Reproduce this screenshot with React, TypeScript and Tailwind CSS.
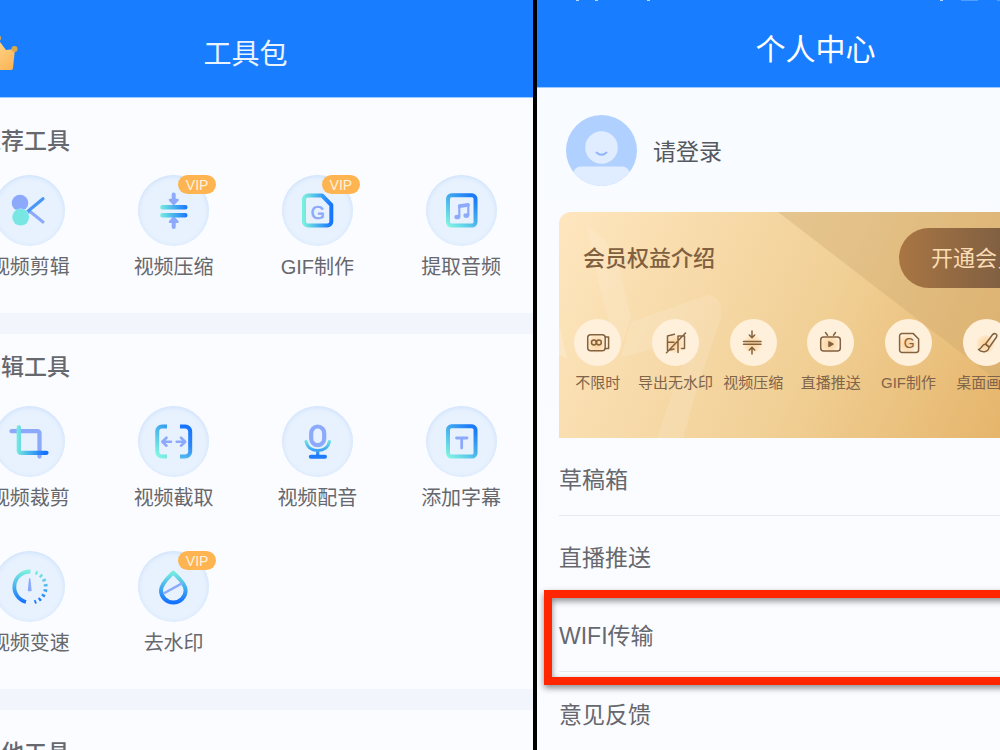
import React from "react";

const PERI = "#8da9fc";
const BROWN = "#82623f";

function Gradients() {
  return (
    <svg width="0" height="0" className="absolute" aria-hidden="true">
      <defs>
        <linearGradient id="h" gradientUnits="userSpaceOnUse" x1="22" y1="0" x2="50" y2="0">
          <stop offset="0" stopColor="#78eede" />
          <stop offset="1" stopColor="#1673ff" />
        </linearGradient>
        <linearGradient id="d" gradientUnits="userSpaceOnUse" x1="22" y1="50" x2="46" y2="22">
          <stop offset="0" stopColor="#80f3e2" />
          <stop offset="1" stopColor="#1c7cf8" />
        </linearGradient>
        <linearGradient id="v" gradientUnits="userSpaceOnUse" x1="0" y1="20" x2="0" y2="51">
          <stop offset="0" stopColor="#7cf0de" />
          <stop offset="1" stopColor="#1673ff" />
        </linearGradient>
        <linearGradient id="vr" gradientUnits="userSpaceOnUse" x1="50" y1="20" x2="44" y2="51">
          <stop offset="0" stopColor="#1673ff" />
          <stop offset="0.6" stopColor="#2a86fa" />
          <stop offset="1" stopColor="#4fb6ee" />
        </linearGradient>
        <linearGradient id="m" gradientUnits="userSpaceOnUse" x1="0" y1="33" x2="0" y2="51">
          <stop offset="0" stopColor="#7cf0de" />
          <stop offset="1" stopColor="#1673ff" />
        </linearGradient>
        <linearGradient id="crown" x1="0" y1="0" x2="1" y2="1">
          <stop offset="0" stopColor="#ffe3a0" />
          <stop offset="1" stopColor="#fbb254" />
        </linearGradient>
        <radialGradient id="glow">
          <stop offset="0" stopColor="#ffcf94" />
          <stop offset="1" stopColor="#ffcf94" stopOpacity="0.2" />
        </radialGradient>
      </defs>
    </svg>
  );
}

const icons: Record<string, React.ReactNode> = {
  scissors: (
    <>
      <path d="M33 38.500L36 36.500L49 47" stroke={PERI} strokeWidth="3" />
      <circle cx="26" cy="28" r="8.3" fill={PERI} />
      <path d="M30 39.500L49 23.700" stroke="#4a98f5" strokeWidth="3.200" />
      <circle cx="26.700" cy="42.200" r="8.800" fill="#e8f2fe" />
      <circle cx="26.700" cy="42.200" r="8.400" fill="#78e6e2" />
    </>
  ),
  compress: (
    <>
      <path d="M35.700 19.500V27M35.700 52V44" stroke={PERI} strokeWidth="4" />
      <path d="M32 25h7.500l-3.800 4zM32 46.800h7.500l-3.800-4z" fill={PERI} stroke={PERI} strokeWidth="2.500" />
      <path d="M24.400 32.200H47.300M24.400 40.200H47.300" stroke="url(#h)" strokeWidth="4.500" />
    </>
  ),
  gif: (
    <>
      <path d="M26 20.500H40L49.300 30V46.500a4 4 0 0 1-4 4H26a4 4 0 0 1-4-4V24.500a4 4 0 0 1 4-4z" stroke="url(#h)" strokeWidth="4" />
      <text x="35.800" y="43.500" textAnchor="middle" fontSize="18" fontFamily="Liberation Sans" fill={PERI} stroke={PERI} strokeWidth="0.700">G</text>
    </>
  ),
  music: (
    <>
      <rect x="22" y="20.300" width="27.500" height="30.300" rx="3.500" stroke="url(#d)" strokeWidth="4" />
      <path d="M33.300 42V30.300L42.300 29V40" stroke={PERI} strokeWidth="2.200" />
      <path d="M33.300 31.500l9-1.300" stroke={PERI} strokeWidth="3" />
      <ellipse cx="31.300" cy="42" rx="2.900" ry="2.300" fill={PERI} />
      <ellipse cx="40.300" cy="40.600" rx="2.900" ry="2.300" fill={PERI} />
    </>
  ),
  crop: (
    <>
      <path d="M17.500 25.200H43.500a2 2 0 0 1 2 2V50.500" stroke={PERI} strokeWidth="4.300" />
      <path d="M24.800 21.500V44.800a2 2 0 0 0 2 2H52.500" stroke="url(#h)" strokeWidth="4.300" />
    </>
  ),
  cut: (
    <>
      <path d="M29 20.500H24.200a5 5 0 0 0-5 5V45.500a5 5 0 0 0 5 5H29" stroke="url(#d)" strokeWidth="4" strokeLinecap="butt" />
      <path d="M42 20.500H47.200a5 5 0 0 1 5 5V45.500a5 5 0 0 1-5 5H42" stroke="url(#vr)" strokeWidth="4" strokeLinecap="butt" />
      <path d="M33 35.700H25M28.500 31.700l-4.200 4 4.200 4M38.700 35.700H46.500M43 31.700l4.200 4-4.200 4" stroke={PERI} strokeWidth="2.600" />
    </>
  ),
  mic: (
    <>
      <rect x="29.200" y="20.500" width="13" height="18.700" rx="6.500" stroke={PERI} strokeWidth="4.200" />
      <path d="M24 35.500C25.500 42 30 44.500 35.700 44.500S46 42 47.500 35.500M35.700 45V50" stroke="url(#m)" strokeWidth="3.200" />
      <path d="M28.800 50.800H43" stroke="#1f7cfb" strokeWidth="4" />
    </>
  ),
  caption: (
    <>
      <rect x="22" y="20.300" width="27.500" height="30.300" rx="3.500" stroke="url(#d)" strokeWidth="4" />
      <path d="M30.500 32H41M35.700 32V42" stroke={PERI} strokeWidth="2.800" />
    </>
  ),
  speed: (
    <>
      <path d="M36.500 20.500A15.500 15.500 0 0 0 32 51" stroke="url(#v)" strokeWidth="3.800" strokeLinecap="butt" />
      <path d="M41.500 21.500A15.500 15.500 0 0 1 40.500 51" stroke="url(#v)" strokeWidth="3.800" strokeLinecap="butt" strokeDasharray="2.300 3" />
      <path d="M35.700 28l-1.200 11.500h2.400z" fill={PERI} stroke={PERI} strokeWidth="1.500" />
    </>
  ),
  drop: (
    <>
      <path d="M35.200 21.500C32 25 23 32 23 39.500a12.300 12 0 0 0 24.600 0C47.600 32 38.500 25 35.200 21.500z" stroke="url(#v)" strokeWidth="4" />
      <path d="M26.500 42L43.500 32.600" stroke={PERI} strokeWidth="2.400" />
    </>
  ),
};

const goldIcons: Record<string, React.ReactNode> = {
  unlimited: (
    <>
      <rect x="13.700" y="15.700" width="17.500" height="16" rx="3" />
      <path d="M31.200 18H34.600V29.500H31.200" />
      <circle cx="19.900" cy="23.500" r="2.400" />
      <circle cx="24.900" cy="23.500" r="2.400" />
    </>
  ),
  nomark: (
    <path d="M22.500 15.200L15.500 17V31.500L22 30M15.500 23.300H22M26 33.500V17H32.500V29.500H29.500M14.500 33.800L33.500 14" />
  ),
  compress: (
    <>
      <path d="M13.500 22.500H31M13.500 25.300H31" />
      <path d="M22 12V18.500M19.300 16l2.700 2.700 2.700-2.700M22 35V28.500M19.300 31l2.700-2.700 2.700 2.700" />
    </>
  ),
  live: (
    <>
      <rect x="13.700" y="18" width="19.600" height="14" rx="3" />
      <path d="M18.500 13.500l2 2.700M28.500 13.500l-2 2.700" />
      <path d="M22 22.800v4.600l4-2.300z" fill={BROWN} />
    </>
  ),
  gif: (
    <>
      <path d="M17 14.600H28.300L33.600 20V31a2.400 2.400 0 0 1-2.400 2.400H17A2.400 2.400 0 0 1 14.600 31V17A2.400 2.400 0 0 1 17 14.600z" />
      <text x="24.300" y="29.300" textAnchor="middle" fontSize="14" fontFamily="Liberation Sans" fill={BROWN} strokeWidth="0">G</text>
    </>
  ),
  brush: (
    <>
      <path d="M22.500 25L29.500 15.800C31.500 13.500 35 15 33.500 18L26.500 28z" />
      <path d="M22.500 25.300C18.500 25 19.500 30 15.500 30.500C18 33.500 25.500 34 26 28.300z" />
    </>
  ),
};

type Tool = { name: string; icon: string; vip?: boolean };

const recommended: Tool[] = [
  { name: "视频剪辑", icon: "scissors" },
  { name: "视频压缩", icon: "compress", vip: true },
  { name: "GIF制作", icon: "gif", vip: true },
  { name: "提取音频", icon: "music" },
];

const editing: Tool[] = [
  { name: "视频裁剪", icon: "crop" },
  { name: "视频截取", icon: "cut" },
  { name: "视频配音", icon: "mic" },
  { name: "添加字幕", icon: "caption" },
  { name: "视频变速", icon: "speed" },
  { name: "去水印", icon: "drop", vip: true },
];

const benefits = [
  { name: "不限时", icon: "unlimited" },
  { name: "导出无水印", icon: "nomark" },
  { name: "视频压缩", icon: "compress" },
  { name: "直播推送", icon: "live" },
  { name: "GIF制作", icon: "gif" },
  { name: "桌面画笔", icon: "brush" },
];

const menu = ["草稿箱", "直播推送", "WIFI传输", "意见反馈"];

function ToolGrid({ tools }: { tools: Tool[] }) {
  return (
    <div className="grid grid-cols-4 gap-y-9">
      {tools.map((t) => (
        <button key={t.name} type="button" className="flex flex-col items-center gap-1">
          <span className="relative block size-[71px] rounded-full bg-[#e8f2fe] shadow-[inset_0_1px_5px_#c9defc]">
            <svg viewBox="0 0 71 71" className="size-full" fill="none" strokeLinecap="round" strokeLinejoin="round" aria-hidden="true">
              {icons[t.icon]}
            </svg>
            {t.vip && (
              <span className="absolute top-0 left-10 flex h-[19px] w-[38px] items-center justify-center rounded-full bg-[#fdb451] pt-px text-sm text-[#fff3df]">
                VIP
              </span>
            )}
          </span>
          <span className="text-xl leading-[34px] whitespace-nowrap text-[#66686d]">{t.name}</span>
        </button>
      ))}
    </div>
  );
}

function Heading({ children }: { children: React.ReactNode }) {
  return <h2 className="px-5 text-[23px] leading-8 font-medium text-[#66686e]">{children}</h2>;
}

function Toolkit() {
  return (
    <section className="flex min-w-0 flex-[533] overflow-hidden bg-[#fbfcff]">
      <div className="-ml-[42px] flex min-w-0 flex-1 flex-col">
        <header className="grid h-[98px] shrink-0 grid-cols-3 items-center border-b border-[#9cc9ff] bg-[#187dff] pt-3">
          <svg viewBox="0 0 42 36" className="mb-1 ml-[19px] h-9 w-[42px]" aria-label="VIP">
            <path d="M1 14L11 16 20 3 29 15 38 14 36 33a2 2 0 0 1-2 2H6a2 2 0 0 1-2-2z" fill="url(#crown)" />
            <circle cx="21" cy="3" r="3" fill="#dca94a" />
            <circle cx="37.500" cy="14" r="3" fill="#dca94a" />
            <circle cx="2.500" cy="14" r="2.500" fill="#dca94a" />
          </svg>
          <h1 className="text-center text-[28px] leading-10 text-[#eaf4ff]">工具包</h1>
        </header>
        <div className="flex shrink-0 flex-col gap-[18px] pt-[27px] pb-[29px]">
          <Heading>推荐工具</Heading>
          <ToolGrid tools={recommended} />
        </div>
        <div className="h-[21px] shrink-0 bg-[#f2f5fb]" />
        <div className="flex shrink-0 flex-col gap-[23px] pt-[17px] pb-[29px]">
          <Heading>编辑工具</Heading>
          <ToolGrid tools={editing} />
        </div>
        <div className="h-[21px] shrink-0 bg-[#f2f5fb]" />
        <div className="shrink-0 pt-[27px]">
          <Heading>其他工具</Heading>
        </div>
      </div>
    </section>
  );
}

function MemberCard() {
  return (
    <div className="relative h-[226px] shrink-0 overflow-hidden rounded-t-xl bg-linear-115 from-[#fee6bf] via-[#f1d096] to-[#e2ad5d]">
      <svg viewBox="0 0 513 226" preserveAspectRatio="none" className="absolute inset-0 size-full" aria-hidden="true">
        <path d="M219 0H513V226z" fill="#c9a66e" fillOpacity="0.360" />
        <path d="M27 12L48 30 60 55 72 106 60 140 50 110 38 65z" fill="#fff" fillOpacity="0.120" />
        <path d="M72 110L148 83Q164 84 162 105L140 170 124 226H98L132 128 62 145z" fill="#fff" fillOpacity="0.120" />
        <path d="M0 112L8 147 0 143z" fill="#fff" fillOpacity="0.200" />
      </svg>
      <div className="relative flex flex-col gap-[31px]">
        <div className="flex items-center justify-between pt-4 pl-6">
          <h2 className="pt-0.5 text-[22px] leading-8 font-medium text-[#80603f]">会员权益介绍</h2>
          <button type="button" className="h-[60px] w-[173px] rounded-l-full bg-linear-to-r from-[#a97643] to-[#65503f] pl-8 text-left text-[22px] whitespace-nowrap text-[#fbdcb4]">
            开通会员
          </button>
        </div>
        <ul className="grid w-[466px] grid-cols-6">
          {benefits.map((b) => (
            <li key={b.name} className="flex flex-col items-center gap-[5px]">
              <span className="block size-[47px] rounded-full bg-[#fff0db]">
                <svg viewBox="0 0 47 47" className="size-full" fill="none" stroke={BROWN} strokeWidth="1.500" strokeLinecap="round" strokeLinejoin="round" aria-hidden="true">
                  <circle cx="22.500" cy="25" r="9" fill="url(#glow)" stroke="none" />
                  {goldIcons[b.icon]}
                </svg>
              </span>
              <span className="text-[15px] leading-6 whitespace-nowrap text-[#80644a]">{b.name}</span>
            </li>
          ))}
        </ul>
      </div>
    </div>
  );
}

function Profile() {
  return (
    <section className="min-w-0 flex-[463] overflow-hidden bg-[#fbfcff]">
      <div className="-mr-[94px] flex flex-col">
        <header className="relative flex h-[88px] items-center justify-center border-b border-[#9cc9ff] bg-[#187dff] pt-3">
          <svg width="463" height="2" className="absolute top-0 left-0" stroke="#fff" strokeOpacity="0.700" aria-hidden="true">
            <path d="M39 0.500h3M58 0.500h3M110 0.500h3M403 0.500h3" />
            <path d="M424 0.500h17M460 0.500h3" strokeOpacity="0.250" />
          </svg>
          <h1 className="text-[30px] leading-10 text-white">个人中心</h1>
        </header>
        <div className="flex flex-col bg-linear-to-b from-[#f8fbff] to-[#fbfcff] px-[22px]">
          <button type="button" className="flex h-[124px] items-center gap-4 pl-[7px]">
            <svg viewBox="0 0 71 71" className="size-[71px]" aria-hidden="true">
              <clipPath id="face">
                <circle cx="35.500" cy="35.500" r="35.500" />
              </clipPath>
              <g clipPath="url(#face)">
                <rect width="71" height="71" fill="#b0d1ff" />
                <circle cx="35.500" cy="32.500" r="16.300" fill="#e0ecff" />
                <rect x="7" y="51.500" width="57" height="30" rx="8" fill="#e0ecff" />
              </g>
              <path d="M30.500 37.500Q35.500 42 40.500 37.500" fill="none" stroke="#8fb4fa" strokeWidth="1.800" strokeLinecap="round" />
            </svg>
            <span className="pt-1 text-[23px] leading-8 text-[#55585e]">请登录</span>
          </button>
          <MemberCard />
          <ul>
            {menu.map((item) => (
              <li key={item} className="relative h-[78px] border-b border-[#e6e9ef] last:border-0">
                <a href="#" className="flex h-full items-center pt-2 text-[23px] text-[#66686e]">
                  {item}
                </a>
                {item === "WIFI传输" && (
                  <span className="pointer-events-none absolute -top-1 -right-10 -left-[15px] h-[95px] border-8 border-[#ff2600] drop-shadow-[0_3px_3px_rgba(0,0,0,0.45)]" />
                )}
              </li>
            ))}
          </ul>
        </div>
      </div>
    </section>
  );
}

export default function App() {
  return (
    <main lang="zh-CN" className="flex h-screen overflow-hidden bg-white font-['Liberation_Sans','Noto_Sans_CJK_SC',sans-serif]">
      <Gradients />
      <Toolkit />
      <div className="w-1 shrink-0 bg-black" />
      <Profile />
    </main>
  );
}
